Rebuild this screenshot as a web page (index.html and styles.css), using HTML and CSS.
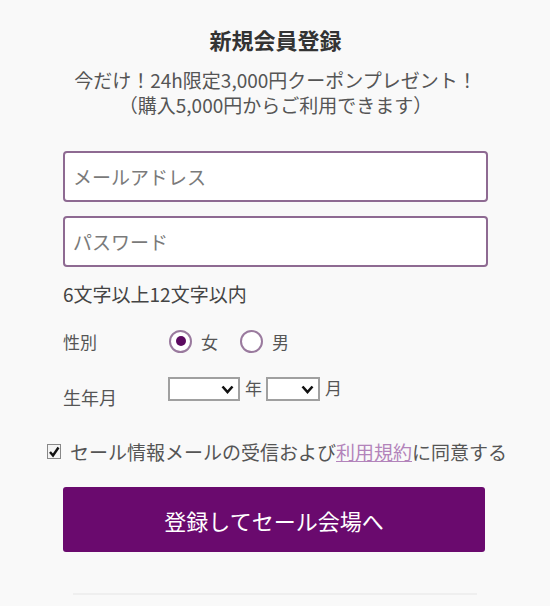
FILE: index.html
```html
<!DOCTYPE html>
<html lang="ja">
<head>
<meta charset="utf-8">
<link rel="stylesheet" href="styles.css">
</head>
<body>
<main class="page">
  <h1 class="title">新規会員登録</h1>
  <p class="lead">今だけ！24h限定3,000円クーポンプレゼント！<br>（購入5,000円からご利用できます）</p>
  <form class="form">
    <input class="field" type="text" placeholder="メールアドレス">
    <input class="field" type="password" placeholder="パスワード">
    <p class="hint">6文字以上12文字以内</p>
    <div class="row gender">
      <span class="label">性別</span>
      <label class="radio"><span class="dot checked"></span>女</label>
      <label class="radio"><span class="dot"></span>男</label>
    </div>
    <div class="row birth">
      <span class="label label-low">生年月</span>
      <span class="sel sel-year"><svg width="13" height="9" viewBox="0 0 13 9"><path d="M1.5 1.5 L6.5 7 L11.5 1.5" fill="none" stroke="#111" stroke-width="2.6"/></svg></span>
      <span class="unit">年</span>
      <span class="sel sel-month"><svg width="13" height="9" viewBox="0 0 13 9"><path d="M1.5 1.5 L6.5 7 L11.5 1.5" fill="none" stroke="#111" stroke-width="2.6"/></svg></span>
      <span class="unit">月</span>
    </div>
    <label class="agree">
      <span class="check"><svg width="12" height="12" viewBox="0 0 12 12"><path d="M2 6 L5 9.5 L10.5 1.5" fill="none" stroke="#111" stroke-width="2.4"/></svg></span>
      セール情報メールの受信および<a class="terms" href="#">利用規約</a>に同意する
    </label>
    <button class="submit" type="button">登録してセール会場へ</button>
  </form>
  <hr class="rule">
</main>
</body>
</html>
```

FILE: styles.css
```css
* { box-sizing: border-box; }
html, body { margin: 0; padding: 0; }
body {
  background: #f9f9f9;
  font-family: "Noto Sans CJK JP", "Noto Sans", sans-serif;
  color: #444;
  width: 550px;
  height: 606px;
  overflow: hidden;
}
.page {
  padding: 26px 62px 0 63px;
}
.title {
  margin: 0;
  text-align: center;
  font-size: 22px;
  font-weight: bold;
  line-height: 26px;
  color: #333;
}
.lead {
  margin: 15px 0 0;
  text-align: center;
  font-size: 19px;
  line-height: 25px;
  color: #555;
}
.form {
  margin-top: 34px;
  display: flex;
  flex-direction: column;
}
.field {
  display: block;
  width: 425px;
  height: 51px;
  border: 2px solid #8e6a92;
  border-radius: 4px;
  background: #fff;
  padding: 0 8px;
  font-family: inherit;
  font-size: 19px;
  color: #333;
  outline: none;
}
.field + .field { margin-top: 14px; }
.field::placeholder { color: #7a7a7a; }
.hint {
  margin: 14px 0 0;
  font-size: 19px;
  line-height: 26px;
  color: #444;
}
.row {
  display: flex;
  align-items: center;
}
.gender {
  margin-top: 21px;
  height: 26px;
}
.label {
  width: 106px;
  font-size: 17px;
  color: #555;
}
.radio {
  display: flex;
  align-items: center;
  font-size: 17px;
  color: #555;
  margin-right: 22px;
}
.dot {
  width: 23px;
  height: 23px;
  border: 2px solid #9a7a9e;
  border-radius: 50%;
  margin-right: 9px;
  display: flex;
  align-items: center;
  justify-content: center;
  background: #fff;
}
.dot.checked::after {
  content: "";
  width: 10px;
  height: 10px;
  border-radius: 50%;
  background: #5c0a60;
}
.birth {
  margin-top: 23px;
  height: 28px;
  align-items: flex-start;
}
.label-low {
  margin-top: 7px;
  font-size: 18px;
  width: 105px;
}
.sel {
  height: 24px;
  border: 2px solid #a0a0a0;
  background: #fff;
  display: flex;
  align-items: center;
  justify-content: flex-end;
  padding-right: 4px;
}
.sel-year { width: 72px; }
.sel-month { width: 54px; }
.unit {
  font-size: 17px;
  color: #555;
  line-height: 22px;
  margin: 0 4px 0 5px;
}
.agree {
  margin: 33px 0 0 -16px;
  display: flex;
  align-items: center;
  font-size: 19px;
  color: #555;
  white-space: nowrap;
}
.check {
  width: 15px;
  height: 15px;
  border: 1.5px solid #888;
  background: #f4f4f4;
  display: flex;
  align-items: center;
  justify-content: center;
  margin-right: 9px;
}
.terms {
  color: #b384bb;
  text-decoration: underline;
}
.submit {
  margin-top: 22px;
  width: 422px;
  height: 65px;
  border: none;
  border-radius: 3px;
  background: #6a0a6e;
  color: #fff;
  font-family: inherit;
  font-size: 22px;
  padding: 0;
}
.rule {
  margin: 41px 11px 0 10px;
  border: none;
  height: 2px;
  background: #efefef;
}
```
